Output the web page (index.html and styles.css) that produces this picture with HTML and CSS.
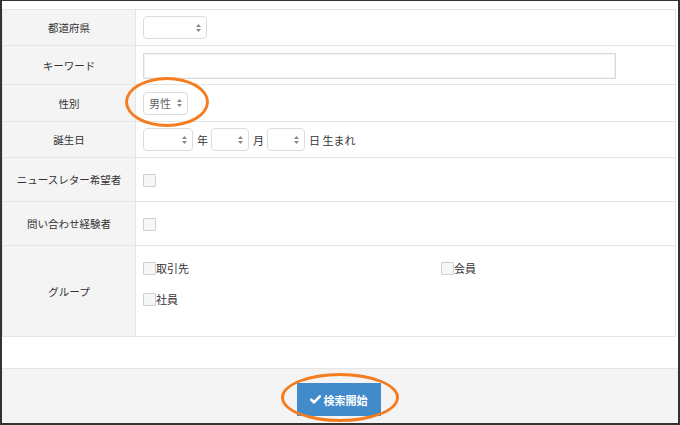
FILE: index.html
```html
<!DOCTYPE html>
<html lang="ja">
<head>
<meta charset="utf-8">
<link rel="stylesheet" href="styles.css">
</head>
<body>
<div class="frame">
  <div class="form">
    <div class="row r1">
      <div class="label">都道府県</div>
      <div class="cell"><div class="select w64"><span class="val"></span><svg class="arr" width="5" height="8" viewBox="0 0 5 8"><path d="M2.5 0L5 3H0z M2.5 8L5 5H0z" fill="#888"/></svg></div></div>
    </div>
    <div class="row r2">
      <div class="label">キーワード</div>
      <div class="cell"><div class="input"></div></div>
    </div>
    <div class="row r3">
      <div class="label">性別</div>
      <div class="cell"><div class="select w45"><span class="val">男性</span><svg class="arr" width="5" height="8" viewBox="0 0 5 8"><path d="M2.5 0L5 3H0z M2.5 8L5 5H0z" fill="#888"/></svg></div></div>
    </div>
    <div class="row r4">
      <div class="label">誕生日</div>
      <div class="cell">
        <div class="select w50"><span class="val"></span><svg class="arr" width="5" height="8" viewBox="0 0 5 8"><path d="M2.5 0L5 3H0z M2.5 8L5 5H0z" fill="#888"/></svg></div>
        <span class="unit">年</span>
        <div class="select w38"><span class="val"></span><svg class="arr" width="5" height="8" viewBox="0 0 5 8"><path d="M2.5 0L5 3H0z M2.5 8L5 5H0z" fill="#888"/></svg></div>
        <span class="unit">月</span>
        <div class="select w38"><span class="val"></span><svg class="arr" width="5" height="8" viewBox="0 0 5 8"><path d="M2.5 0L5 3H0z M2.5 8L5 5H0z" fill="#888"/></svg></div>
        <span class="unit">日 生まれ</span>
      </div>
    </div>
    <div class="row r5">
      <div class="label">ニュースレター希望者</div>
      <div class="cell"><span class="check"></span></div>
    </div>
    <div class="row r6">
      <div class="label">問い合わせ経験者</div>
      <div class="cell"><span class="check"></span></div>
    </div>
    <div class="row r7">
      <div class="label">グループ</div>
      <div class="cell groups">
        <label class="opt"><span class="check"></span>取引先</label>
        <label class="opt"><span class="check"></span>会員</label>
        <label class="opt"><span class="check"></span>社員</label>
      </div>
    </div>
  </div>
  <div class="footer">
    <button class="btn"><svg width="11" height="9" viewBox="0 0 11 9"><path d="M1.2 4.6L4 7.4L9.8 1.4" fill="none" stroke="#fff" stroke-width="2.6" stroke-linecap="round" stroke-linejoin="round"/></svg>検索開始</button>
  </div>
  <div class="mark mark1"></div>
  <div class="mark mark2"></div>
</div>
</body>
</html>
```

FILE: styles.css
```css
html, body {
  margin: 0;
  padding: 0;
  background: #fff;
}
body {
  font-family: "Noto Sans CJK JP", "Noto Sans", sans-serif;
  color: #333;
}
.frame {
  position: relative;
  width: 680px;
  height: 425px;
  box-sizing: border-box;
  border: 1px solid #333;
  border-left-width: 2px;
  border-right-width: 2px;
  border-bottom-width: 2px;
  display: flex;
  flex-direction: column;
  background: #fff;
}
.form {
  margin: 8px 2px 0 0;
  border: 1px solid #e5e5e5;
  border-bottom: none;
}
.row {
  display: grid;
  grid-template-columns: 133px 1fr;
  border-bottom: 1px solid #e5e5e5;
  box-sizing: border-box;
}
.r1 { height: 36px; }
.r2 { height: 39px; }
.r3 { height: 37px; }
.r4 { height: 36px; }
.r5 { height: 44px; }
.r6 { height: 44px; }
.r7 { height: 91px; }
.label {
  background: #f4f4f4;
  border-right: 1px solid #e5e5e5;
  display: flex;
  align-items: center;
  justify-content: center;
  font-size: 10.5px;
  color: #333;
  white-space: nowrap;
}
.cell {
  display: flex;
  align-items: center;
  padding-left: 7px;
}
.select {
  box-sizing: border-box;
  height: 23px;
  border: 1px solid #dcdcdc;
  border-radius: 4px;
  background: #fff;
  display: flex;
  align-items: center;
  justify-content: space-between;
  padding: 0 5px 0 5px;
  font-size: 11px;
  color: #666;
}
.w64 { width: 64px; }
.w45 { width: 45px; }
.w50 { width: 50px; }
.w38 { width: 38px; }
.arr { flex: none; }
.input {
  box-sizing: border-box;
  width: 473px;
  height: 26px;
  border: 1px solid #dadada;
  box-shadow: inset 0 0 0 1px #f0f0f0;
  background: #fff;
  margin-top: 1px;
}
.unit {
  font-size: 11px;
  color: #333;
  margin: 0 3px 0 4px;
}
.check {
  display: inline-block;
  box-sizing: border-box;
  width: 13px;
  height: 13px;
  border: 1px solid #d0d0d0;
  background: #f7f7f7;
  border-radius: 1px;
  flex: none;
}
.r5 .check, .r6 .check { margin-top: 2px; }
.groups {
  display: grid;
  grid-template-columns: 298px 1fr;
  grid-auto-rows: 31px;
  align-items: start;
  align-content: start;
  padding-top: 14px;
}
.opt {
  display: flex;
  align-items: center;
  font-size: 11px;
  color: #333;
}
.footer {
  flex: 1;
  margin-top: 31px;
  border-top: 1px solid #e5e5e5;
  background: #f4f4f4;
  display: flex;
  justify-content: center;
  align-items: flex-start;
  padding-top: 14px;
  padding-right: 3px;
}
.btn {
  width: 84px;
  height: 33px;
  border: none;
  border-radius: 0;
  background: #428bca;
  color: #fff;
  font-family: "Noto Sans CJK JP", sans-serif;
  font-weight: bold;
  font-size: 11px;
  display: flex;
  align-items: center;
  justify-content: center;
  gap: 3px;
  padding: 0;
}
.mark {
  position: absolute;
  box-sizing: border-box;
  border: 3px solid #f57d1f;
  border-radius: 50%;
}
.mark1 {
  left: 123px;
  top: 76px;
  width: 84px;
  height: 50px;
}
.mark2 {
  left: 279px;
  top: 372px;
  width: 118px;
  height: 49px;
}
```
